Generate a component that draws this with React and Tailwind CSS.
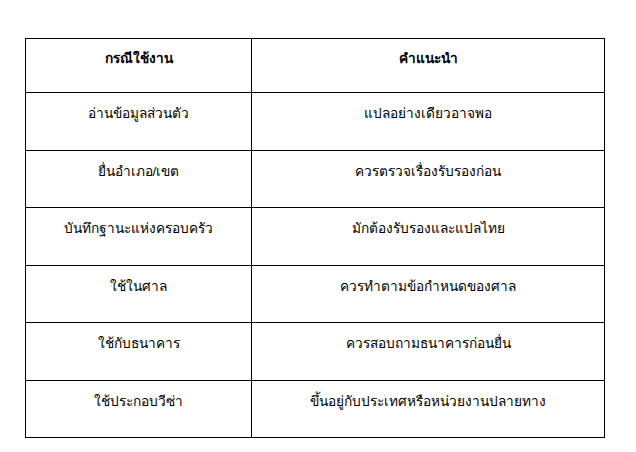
import React from "react";

const rows = [
  ["อ่านข้อมูลส่วนตัว", "แปลอย่างเดียวอาจพอ", "h-[58px]"],
  ["ยื่นอำเภอ/เขต", "ควรตรวจเรื่องรับรองก่อน", "h-[57px]"],
  ["บันทึกฐานะแห่งครอบครัว", "มักต้องรับรองและแปลไทย", "h-[58px]"],
  ["ใช้ในศาล", "ควรทำตามข้อกำหนดของศาล", "h-[57px]"],
  ["ใช้กับธนาคาร", "ควรสอบถามธนาคารก่อนยื่น", "h-[58px]"],
  ["ใช้ประกอบวีซ่า", "ขึ้นอยู่กับประเทศหรือหน่วยงานปลายทาง", "h-[56px]"],
];

export default function App() {
  return (
    <div className="w-[636px] h-[452px] bg-white pt-[38px] pl-[25px] text-black" style={{ fontFamily: '"Liberation Sans", sans-serif' }}>
      <div className="w-[580px] border border-black grid grid-cols-[226px_352px]">
        <div className="h-[54px] border-r border-b border-black flex justify-center pt-[10px] text-[13.7px] font-bold leading-[20px]">กรณีใช้งาน</div>
        <div className="h-[54px] border-b border-black flex justify-center pt-[10px] text-[13.7px] font-bold leading-[20px]">คำแนะนำ</div>
        {rows.map(([a, b, h], i) => {
          const last = i === rows.length - 1;
          return (
            <React.Fragment key={i}>
              <div className={`${h} border-r border-black ${last ? "" : "border-b"} flex justify-center pt-[11px] text-[13.7px] leading-[20px]`}>{a}</div>
              <div className={`${h} border-black ${last ? "" : "border-b"} flex justify-center pt-[11px] text-[13.7px] leading-[20px]`}>{b}</div>
            </React.Fragment>
          );
        })}
      </div>
    </div>
  );
}
